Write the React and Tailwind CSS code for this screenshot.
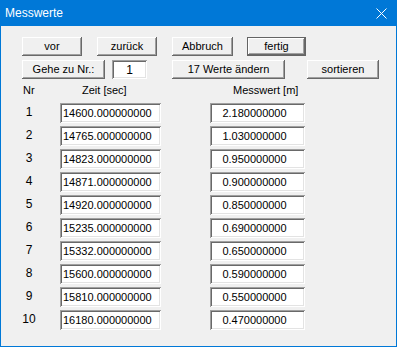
const ROWS = [
  ['14600.000000000', '2.180000000'],
  ['14765.000000000', '1.030000000'],
  ['14823.000000000', '0.950000000'],
  ['14871.000000000', '0.900000000'],
  ['14920.000000000', '0.850000000'],
  ['15235.000000000', '0.690000000'],
  ['15332.000000000', '0.650000000'],
  ['15600.000000000', '0.590000000'],
  ['15810.000000000', '0.550000000'],
  ['16180.000000000', '0.470000000'],
];

const RAISED =
  'bg-[#f0f0f0] shadow-[inset_-1px_-1px_0_#696969,inset_1px_1px_0_#ffffff,inset_-2px_-2px_0_#a0a0a0]';
const SUNKEN =
  'bg-white shadow-[inset_1px_1px_0_#a0a0a0,inset_-1px_-1px_0_#ffffff,inset_2px_2px_0_#696969,inset_-2px_-2px_0_#e3e3e3]';

function Button({ children, className = '', isDefault }) {
  return (
    <div
      className={`h-[19px] flex items-center justify-center text-black ${
        isDefault ? 'border border-[#646464]' : ''
      } ${RAISED} ${className}`}
    >
      {children}
    </div>
  );
}

function Field({ value, className = '' }) {
  return (
    <div className={`h-[20px] flex items-center text-black ${SUNKEN} ${className}`}>
      {value}
    </div>
  );
}

export default function App() {
  return (
    <div
      className="w-[397px] h-[347px] border border-t-0 border-[#0078d7] bg-[#f0f0f0] flex flex-col text-[11px] leading-none"
      style={{ fontFamily: '"Liberation Sans", Arial, sans-serif' }}
    >
      {/* title bar */}
      <div className="h-[26px] -mx-[1px] bg-[#0078d7] flex items-center justify-between pl-[5px] pr-[10px] shrink-0">
        <span className="text-white text-[12px]">Messwerte</span>
        <svg width="11" height="11" viewBox="0 0 11 11">
          <path d="M0.5 0.5 L10.5 10.5 M10.5 0.5 L0.5 10.5" stroke="#ffffff" strokeWidth="1" />
        </svg>
      </div>

      <div className="flex flex-col pl-[21px] pt-[11px]">
        <div className="flex">
          <Button className="w-[60px]">vor</Button>
          <Button className="w-[60px] ml-[15px]">zurück</Button>
          <Button className="w-[61px] ml-[15px]">Abbruch</Button>
          <Button className="w-[59px] ml-[14px]" isDefault>fertig</Button>
        </div>

        <div className="flex mt-[4px]">
          <Button className="w-[83px]">Gehe zu Nr.:</Button>
          <div className={`w-[35px] h-[19px] ml-[7px] flex items-center justify-center text-[12px] ${SUNKEN}`}>
            1
          </div>
          <Button className="w-[113px] ml-[25px]">17 Werte ändern</Button>
          <Button className="w-[72px] ml-[22px]">sortieren</Button>
        </div>

        <div className="flex items-center h-[24px] pb-[2px]">
          <span className="w-[60px] pl-[1px]">Nr</span>
          <span className="w-[151px]">Zeit [sec]</span>
          <span>Messwert [m]</span>
        </div>

        <div className="flex flex-col gap-[3px]">
          {ROWS.map(([t, m], i) => (
            <div key={i} className="flex items-center">
              <span className="w-[14px] text-center text-[12px] -mt-[2px]">{i + 1}</span>
              <Field value={t} className="w-[101px] ml-[24px] pl-[3px]" />
              <Field value={m} className="w-[95px] ml-[49px] justify-center pr-[6px]" />
            </div>
          ))}
        </div>
      </div>
    </div>
  );
}
